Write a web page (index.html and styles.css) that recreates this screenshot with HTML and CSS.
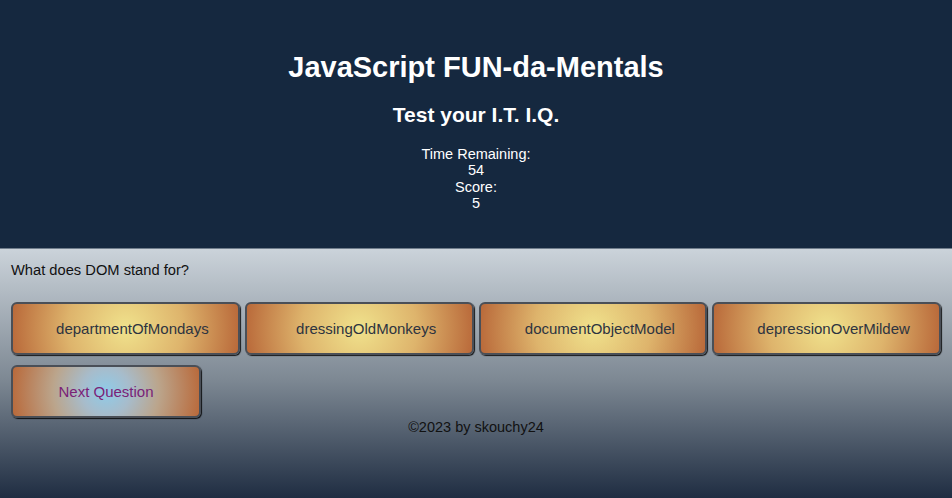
FILE: index.html
```html
<!DOCTYPE html>
<html>
<head>
<meta charset="utf-8">
<link rel="stylesheet" href="styles.css">
</head>
<body>
<header class="top">
  <h1 class="title">JavaScript FUN-da-Mentals</h1>
  <h2 class="subtitle">Test your I.T. I.Q.</h2>
  <div class="stats">
    <div>Time Remaining:</div>
    <div>54</div>
    <div>Score:</div>
    <div>5</div>
  </div>
</header>
<main class="quiz">
  <p class="question">What does DOM stand for?</p>
  <div class="answers">
    <button class="answer">departmentOfMondays</button>
    <button class="answer">dressingOldMonkeys</button>
    <button class="answer">documentObjectModel</button>
    <button class="answer">depressionOverMildew</button>
  </div>
  <button class="next">Next Question</button>
  <footer class="foot">©2023 by skouchy24</footer>
</main>
</body>
</html>
```
FILE: styles.css
```css
html, body {
  margin: 0;
  padding: 0;
  height: 100%;
}
body {
  font-family: "Liberation Sans", Arial, sans-serif;
  background: linear-gradient(to bottom, #15283f 0px, #15283f 248px, #cbd3da 249px, #7d8893 380px, #1f2d42 498px);
  min-height: 498px;
}
.top {
  height: 248px;
  box-sizing: border-box;
  padding-top: 47px;
  text-align: center;
  color: #ffffff;
}
.title {
  margin: 0;
  font-size: 29px;
  font-weight: bold;
  line-height: 40px;
}
.subtitle {
  margin: 16px 0 0;
  font-size: 21px;
  font-weight: bold;
  line-height: 24px;
}
.stats {
  margin-top: 19px;
  font-size: 14.5px;
  line-height: 16.3px;
}
.quiz {
  padding: 14px 11px 0;
}
.question {
  margin: 0;
  font-size: 14.7px;
  line-height: 17px;
  color: #111;
}
.answers {
  display: flex;
  gap: 5px;
  margin-top: 23px;
}
.answer, .next {
  height: 53px;
  border: 2px solid #4a4f57;
  border-radius: 6px;
  box-shadow: 1px 1px 1px rgba(0,0,0,0.85);
  font-family: "Liberation Sans", Arial, sans-serif;
  font-size: 15px;
  cursor: pointer;
}
.answer {
  width: 229px;
  padding: 0 0 0 14px;
  background: radial-gradient(circle, #f0e28c 0%, #deb46c 50%, #b9693a 100%);
  color: #2e3440;
}
.next {
  display: block;
  width: 190px;
  margin-top: 10px;
  background: radial-gradient(circle, #8fcbe8 0%, #a7bccb 25%, #bba58c 55%, #b9693a 100%);
  color: #7a2277;
}
.foot {
  text-align: center;
  margin-top: 0;
  font-size: 14.5px;
  line-height: 18px;
  color: #111;
}
```
